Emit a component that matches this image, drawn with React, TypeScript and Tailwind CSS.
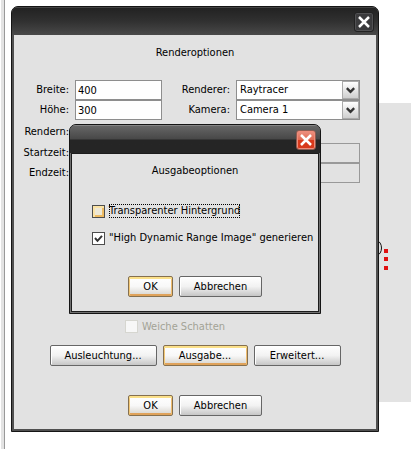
import { useState } from "react";
import type { ReactNode } from "react";

function DialogButton({ children, active = false, className = "" }: { children: ReactNode; active?: boolean; className?: string }) {
  return (
    <button
      type="button"
      className={`h-[21px] rounded-[2px] border text-center ${
        active
          ? "border-[#85704f] bg-linear-to-b from-white via-[#f8f8f8] to-[#d6d3cc] shadow-[inset_0_2px_0_#fbe089,inset_1px_0_0_#f3c877,inset_-1px_0_0_#f0bd70,inset_0_-2px_0_#dfa25a]"
          : "border-[#666] bg-linear-to-b from-white via-[#f2f2f2] to-[#c6c6c6] shadow-[inset_1px_1px_0_#fff]"
      } ${className}`}
    >
      {children}
    </button>
  );
}

function SelectField({ id, options }: { id: string; options: string[] }) {
  return (
    <div className="relative h-5">
      <select id={id} className="h-5 w-full appearance-none border border-[#8e8e8e] bg-white pl-[3px] pr-5">
        {options.map((option) => (
          <option key={option}>{option}</option>
        ))}
      </select>
      <span className="pointer-events-none absolute inset-y-px right-px flex w-[17px] items-center justify-center border border-[#aaa] bg-linear-to-b from-white to-[#cfcfcf]">
        <svg width="9" height="7" viewBox="0 0 9 7" fill="none" stroke="#333" strokeWidth="2.4">
          <path d="M0.8 1.2 4.5 4.9 8.2 1.2" />
        </svg>
      </span>
    </div>
  );
}

function TickBox({ id, checked, onChange, className }: { id: string; checked: boolean; onChange: (v: boolean) => void; className: string }) {
  return (
    <span className="relative block size-[13px] shrink-0">
      <input
        id={id}
        type="checkbox"
        checked={checked}
        onChange={(e) => onChange(e.target.checked)}
        className={`block size-[13px] appearance-none border ${className}`}
      />
      {checked && (
        <svg className="pointer-events-none absolute inset-0" width="13" height="13" viewBox="0 0 13 13" fill="none" stroke="#333" strokeWidth="2">
          <path d="M3 6 5.5 8.8 10 3.8" />
        </svg>
      )}
    </span>
  );
}

function CloseIcon() {
  return (
    <svg width="12" height="12" viewBox="0 0 12 12" fill="none" stroke="#fff" strokeWidth="2.5">
      <path d="M1 1 11 11M11 1 1 11" />
    </svg>
  );
}

function OutputDialog() {
  const [transparent, setTransparent] = useState(false);
  const [hdr, setHdr] = useState(true);

  return (
    <div
      role="dialog"
      aria-labelledby="output-title"
      className="absolute inset-x-[58px] top-[118px] overflow-hidden rounded-t-[7px] border border-[#151515] bg-[#707070]"
    >
      <div className="flex h-7 items-center justify-end border-t border-[#858585] bg-linear-to-b from-[#666] from-0% via-[#484848] via-48% to-[#252525] to-52% pr-1">
        <button
          type="button"
          aria-label="Schließen"
          className="flex size-5 items-center justify-center rounded-[3px] border border-[#8d5c52] bg-linear-to-b from-[#ec9283] from-0% via-[#e06a52] via-48% to-[#d8391b] to-52% shadow-[inset_0_0_0_1px_#ee8b79]"
        >
          <CloseIcon />
        </button>
      </div>

      <div className="mx-px mb-px border border-[#1c1c1c] bg-[#e2e2e2] pb-[14px]">
        <h2 id="output-title" className="pt-[10px] text-center">
          Ausgabeoptionen
        </h2>

        <div className="mt-[26px] flex h-[14px] items-center gap-1 pl-5">
          <TickBox
            id="transparent"
            checked={transparent}
            onChange={setTransparent}
            className="border-[#4d4d4d] bg-[#eee8d5] shadow-[inset_2px_2px_0_#fbe3a5,inset_-2px_-2px_0_#eebb62]"
          />
          <label htmlFor="transparent" className="whitespace-nowrap outline-1 outline-dotted -outline-offset-1 outline-black">
            Transparenter Hintergrund
          </label>
        </div>

        <div className="mt-[13px] flex h-[14px] items-center gap-1 pl-5">
          <TickBox id="hdr" checked={hdr} onChange={setHdr} className="border-[#4d4d4d] bg-white" />
          <label htmlFor="hdr" className="whitespace-nowrap">
            "High Dynamic Range Image" generieren
          </label>
        </div>

        <div className="mt-[31px] flex justify-center gap-[6px]">
          <DialogButton active className="w-[45px]">OK</DialogButton>
          <DialogButton className="w-[83px]">Abbrechen</DialogButton>
        </div>
      </div>
    </div>
  );
}

export default function App() {
  const [soft, setSoft] = useState(false);

  return (
    <main className="relative flex min-h-screen bg-white font-['DejaVu_Sans_Condensed','DejaVu_Sans',sans-serif] text-[11px] leading-[14px] text-black">
      <div className="w-[5px] shrink-0 border-r border-l border-l-white border-r-[#999] bg-[#e3e3e3]" />

      {/* 3D viewport behind the dialogs */}
      <div className="absolute right-0 top-[103px] h-[299px] w-10 bg-[#e3e3e3]">
        <svg width="40" height="299" viewBox="0 0 40 299">
          <ellipse cx="6" cy="145" rx="4.5" ry="7" fill="none" stroke="#111" />
          <path d="M13 146h4v4h-4zM13 154h4v4h-4zM13 163h4v4h-4z" fill="#e01010" />
        </svg>
      </div>

      <div className="relative mt-[6px] mr-8 mb-4 ml-[6px] flex-1 self-start">
        <section className="overflow-hidden rounded-t-[7px] border border-[#151515] bg-[#505050]">
          <header className="flex h-7 items-center justify-end border-t border-[#444] bg-linear-to-b from-[#222] from-0% via-[#303030] via-48% to-[#494949] pr-1">
            <button
              type="button"
              aria-label="Schließen"
              className="flex size-5 items-center justify-center rounded-[3px] border border-[#222] bg-[#3b3b3d] shadow-[inset_0_0_0_1px_#515153]"
            >
              <CloseIcon />
            </button>
          </header>

          <div className="mx-[2px] mb-[2px] bg-[#e2e2e2] pb-[13px]">
            <h1 className="pt-[11px] text-center">Renderoptionen</h1>

            <div className="mt-5 grid grid-cols-[55px_87fr_62px_124fr] grid-rows-[20px_20px_23px_20px_20px] items-center gap-x-[6px] pr-4">
              <label htmlFor="width" className="text-right">Breite:</label>
              <input id="width" defaultValue="400" className="h-5 w-full min-w-0 border border-[#8e8e8e] bg-white px-[2px]" />
              <label htmlFor="renderer" className="text-right">Renderer:</label>
              <SelectField id="renderer" options={["Raytracer"]} />

              <label htmlFor="height" className="text-right">Höhe:</label>
              <input id="height" defaultValue="300" className="h-5 w-full min-w-0 border border-[#8e8e8e] bg-white px-[2px]" />
              <label htmlFor="camera" className="text-right">Kamera:</label>
              <SelectField id="camera" options={["Camera 1"]} />

              <span className="text-right">Rendern:</span>
              <span className="col-span-3" />

              <label htmlFor="start" className="text-right">Startzeit:</label>
              <input id="start" disabled className="h-5 w-full min-w-0 border border-[#999]" />
              <input disabled aria-label="Bilder/Sek." className="col-start-4 h-5 w-full min-w-0 border border-[#999]" />

              <label htmlFor="end" className="text-right">Endzeit:</label>
              <input id="end" disabled className="h-5 w-full min-w-0 border border-[#999]" />
              <input disabled aria-label="Bilder" className="col-start-4 h-5 w-full min-w-0 border border-[#999]" />
            </div>

            <div className="mt-[137px] flex h-[13px] items-center justify-center gap-1 pr-10 text-[#a3a396]">
              <input
                id="soft"
                type="checkbox"
                disabled
                checked={soft}
                onChange={(e) => setSoft(e.target.checked)}
                className="size-[13px] appearance-none border border-[#d6d6d0] bg-[#f7f7f7]"
              />
              <label htmlFor="soft">Weiche Schatten</label>
            </div>

            <div className="mt-3 flex justify-center gap-[6px]">
              <DialogButton className="w-[107px]">Ausleuchtung...</DialogButton>
              <DialogButton active className="w-[85px]">Ausgabe...</DialogButton>
              <DialogButton className="w-[87px]">Erweitert...</DialogButton>
            </div>

            <div className="mt-[29px] flex justify-center gap-[6px]">
              <DialogButton active className="w-[45px]">OK</DialogButton>
              <DialogButton className="w-[83px]">Abbrechen</DialogButton>
            </div>
          </div>
        </section>

        <OutputDialog />
      </div>
    </main>
  );
}
